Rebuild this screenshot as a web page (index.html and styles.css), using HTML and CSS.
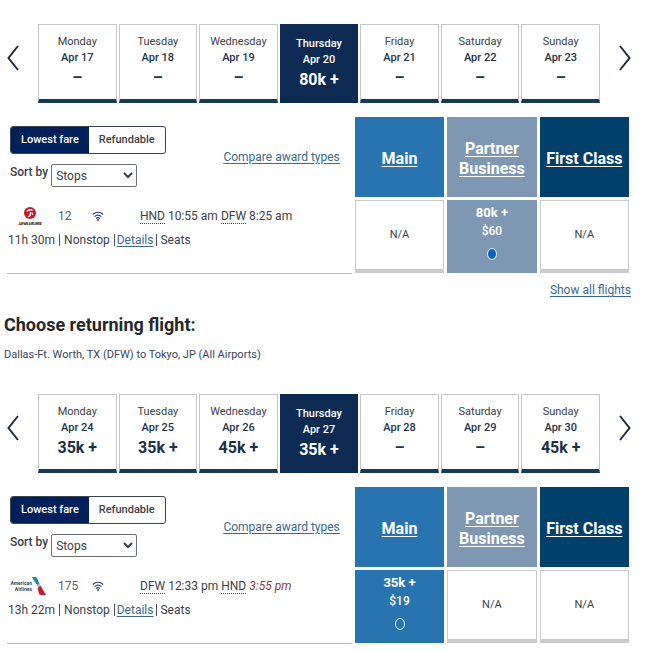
FILE: index.html
```
<!DOCTYPE html>
<html lang="en">
<head>
    <meta charset="UTF-8">
    <meta name="viewport" content="width=device-width, initial-scale=1.0">
    <title>Choose flights</title>
    <link rel="stylesheet" href="styles.css">
</head>
<body>
    <main>
        <!-- Departing flight -->
        <section class="trip">
            <div class="week">
                <button type="button" class="week-arrow" aria-label="Previous week">
                    <svg width="12" height="26" viewBox="0 0 12 26"><path d="M11 1 1.500 13 11 25"/></svg>
                </button>
                <div class="days">
                    <button type="button" class="day"><span>Monday</span><b>Apr 17</b><strong>–</strong></button>
                    <button type="button" class="day"><span>Tuesday</span><b>Apr 18</b><strong>–</strong></button>
                    <button type="button" class="day"><span>Wednesday</span><b>Apr 19</b><strong>–</strong></button>
                    <button type="button" class="day day--active"><span>Thursday</span><b>Apr 20</b><strong>80k +</strong></button>
                    <button type="button" class="day"><span>Friday</span><b>Apr 21</b><strong>–</strong></button>
                    <button type="button" class="day"><span>Saturday</span><b>Apr 22</b><strong>–</strong></button>
                    <button type="button" class="day"><span>Sunday</span><b>Apr 23</b><strong>–</strong></button>
                </div>
                <button type="button" class="week-arrow" aria-label="Next week">
                    <svg width="12" height="26" viewBox="0 0 12 26"><path d="M1 1l9.500 12L1 25"/></svg>
                </button>
            </div>

            <div class="results">
                <div class="info">
                    <div class="controls">
                        <div class="filters">
                            <div class="toggle">
                                <button type="button" class="toggle-btn toggle-btn--on">Lowest fare</button>
                                <button type="button" class="toggle-btn">Refundable</button>
                            </div>
                            <div class="sort">
                                <label for="sort-out">Sort by</label>
                                <select id="sort-out"><option>Stops</option></select>
                            </div>
                        </div>
                        <a href="#" class="compare">Compare award types</a>
                    </div>
                    <div class="flight">
                        <div class="flight-row">
                            <svg class="airline" width="38" height="20" viewBox="0 0 38 20" role="img" aria-label="Japan Airlines">
                                <circle cx="22" cy="7" r="6" fill="#cf1526"/>
                                <path d="M18.500 5Q21 1.500 25 4l-.8 1Q21.500 3.500 19.500 6ZM19.500 10.500q2.500-.5 2.200-4l1.300-.6q.8 4.600-2.600 5.400zM24 6l1.300 2.500-1 .8-1-2.500z" fill="#fff"/>
                                <text x="22" y="19" text-anchor="middle" class="jal-name">JAPAN AIRLINES</text>
                            </svg>
                            <span class="flight-no">12</span>
                            <svg class="wifi" width="12" height="10" viewBox="0 0 12 10"><path d="M.8 3.500q5.200-4.500 10.400 0M2.500 5.600q3.500-3 7 0M4 7.500q2-1.600 4 0"/><circle cx="6" cy="8.900" r="1"/></svg>
                            <span class="times"><abbr>HND</abbr> 10:55 am <abbr>DFW</abbr> 8:25 am</span>
                        </div>
                        <div class="flight-row">
                            <span>11h 30m</span><i class="bar"></i><span>Nonstop</span><i class="bar bar--close"></i><a href="#">Details</a><i class="bar bar--tight"></i><span>Seats</span>
                        </div>
                    </div>
                </div>
                <table class="fares">
                    <thead>
                        <tr>
                            <th class="main"><a href="#">Main</a></th>
                            <th class="partner"><a href="#">Partner Business</a></th>
                            <th class="first"><a href="#">First Class</a></th>
                        </tr>
                    </thead>
                    <tbody>
                        <tr>
                            <td>N/A</td>
                            <td class="fare partner">
                                <label><b>80k +</b><span>$60</span><input type="radio" name="fare-out" checked></label>
                            </td>
                            <td>N/A</td>
                        </tr>
                    </tbody>
                </table>
            </div>
            <div class="more"><a href="#">Show all flights</a></div>
        </section>

        <!-- Returning flight -->
        <section class="trip">
            <h2>Choose returning flight:</h2>
            <p class="route">Dallas-Ft. Worth, TX (DFW) to Tokyo, JP (All Airports)</p>
            <div class="week">
                <button type="button" class="week-arrow" aria-label="Previous week">
                    <svg width="12" height="26" viewBox="0 0 12 26"><path d="M11 1 1.500 13 11 25"/></svg>
                </button>
                <div class="days">
                    <button type="button" class="day"><span>Monday</span><b>Apr 24</b><strong>35k +</strong></button>
                    <button type="button" class="day"><span>Tuesday</span><b>Apr 25</b><strong>35k +</strong></button>
                    <button type="button" class="day"><span>Wednesday</span><b>Apr 26</b><strong>45k +</strong></button>
                    <button type="button" class="day day--active"><span>Thursday</span><b>Apr 27</b><strong>35k +</strong></button>
                    <button type="button" class="day"><span>Friday</span><b>Apr 28</b><strong>–</strong></button>
                    <button type="button" class="day"><span>Saturday</span><b>Apr 29</b><strong>–</strong></button>
                    <button type="button" class="day"><span>Sunday</span><b>Apr 30</b><strong>45k +</strong></button>
                </div>
                <button type="button" class="week-arrow" aria-label="Next week">
                    <svg width="12" height="26" viewBox="0 0 12 26"><path d="M1 1l9.500 12L1 25"/></svg>
                </button>
            </div>

            <div class="results">
                <div class="info">
                    <div class="controls">
                        <div class="filters">
                            <div class="toggle">
                                <button type="button" class="toggle-btn toggle-btn--on">Lowest fare</button>
                                <button type="button" class="toggle-btn">Refundable</button>
                            </div>
                            <div class="sort">
                                <label for="sort-back">Sort by</label>
                                <select id="sort-back"><option>Stops</option></select>
                            </div>
                        </div>
                        <a href="#" class="compare">Compare award types</a>
                    </div>
                    <div class="flight">
                        <div class="flight-row">
                            <svg class="airline" width="38" height="20" viewBox="0 0 38 20" role="img" aria-label="American Airlines">
                                <text x="24" y="9" text-anchor="end" class="aa-name">American</text>
                                <text x="24" y="15" text-anchor="end" class="aa-name">Airlines</text>
                                <path d="M24 1h3q1.500 0 2.200 1.500L31.500 8l-2.500 1z" fill="#1a86a8"/>
                                <path d="M29 8.500q2-1.500 3 .5l-2 2.500z" fill="#9aa6b0"/>
                                <path d="M29.500 12l3-2.500L38 19h-5q-1.500 0-2-1.500z" fill="#c4202f"/>
                            </svg>
                            <span class="flight-no">175</span>
                            <svg class="wifi" width="12" height="10" viewBox="0 0 12 10"><path d="M.8 3.500q5.200-4.500 10.400 0M2.500 5.600q3.500-3 7 0M4 7.500q2-1.600 4 0"/><circle cx="6" cy="8.900" r="1"/></svg>
                            <span class="times"><abbr>DFW</abbr> 12:33 pm <abbr>HND</abbr> <em>3:55 pm</em></span>
                        </div>
                        <div class="flight-row">
                            <span>13h 22m</span><i class="bar"></i><span>Nonstop</span><i class="bar bar--close"></i><a href="#">Details</a><i class="bar bar--tight"></i><span>Seats</span>
                        </div>
                    </div>
                </div>
                <table class="fares">
                    <thead>
                        <tr>
                            <th class="main"><a href="#">Main</a></th>
                            <th class="partner"><a href="#">Partner Business</a></th>
                            <th class="first"><a href="#">First Class</a></th>
                        </tr>
                    </thead>
                    <tbody>
                        <tr>
                            <td class="fare main">
                                <label><b>35k +</b><span>$19</span><input type="radio" name="fare-back"></label>
                            </td>
                            <td>N/A</td>
                            <td>N/A</td>
                        </tr>
                    </tbody>
                </table>
            </div>
        </section>
    </main>
</body>
</html>
```
FILE: styles.css
```
:root {
    --navy: #0d2a52;
    --edge: #173b50;
    --main: #2874b0;
    --partner: #7e98b4;
    --first: #00406a;
    --link: #396a8a;
    --text: #3c4146;
}

* {
    margin: 0;
    padding: 0;
    box-sizing: border-box;
}

body {
    font-family: Roboto, "Liberation Sans", sans-serif;
    font-size: 12px;
    line-height: 16px;
    color: var(--text);
    background-color: #fff;
}

button,
select {
    font: inherit;
    color: inherit;
    background: none;
    border: 0;
}

button {
    cursor: pointer;
}

a {
    color: var(--link);
    text-underline-offset: 2px;
}

main {
    padding-top: 24px;
}

/* Week strip */
.week {
    display: flex;
    align-items: center;
    gap: 19px;
    padding: 0 20px 0 7px;
}

.week-arrow {
    display: flex;
    padding-bottom: 12px;
}

.week-arrow svg {
    fill: none;
    stroke: #1d2b42;
    stroke-width: 2;
}

.days {
    flex: 1;
    display: grid;
    grid-template-columns: repeat(7, minmax(0, 1fr));
    gap: 2px;
}

.day {
    display: flex;
    flex-direction: column;
    align-items: center;
    height: 79px;
    padding-top: 9px;
    border: 1px solid #c4c6c8;
    border-bottom: 4px solid var(--edge);
    font-size: 11px;
    line-height: 16px;
}

.day b {
    font-weight: 500;
    color: #1d3346;
}

.day strong {
    font-size: 16px;
    font-weight: 700;
    line-height: 24px;
    color: #1b3148;
}

.day--active {
    padding-top: 11px;
    background-color: var(--navy);
    border-color: var(--navy);
    font-weight: 500;
}

.day--active,
.day--active b,
.day--active strong {
    color: #fff;
}

/* Search results */
.results {
    display: grid;
    grid-template-columns: minmax(0, 16fr) minmax(0, 13fr);
    margin-top: 11px;
    padding: 0 19px 0 7px;
}

.info {
    display: flex;
    flex-direction: column;
    justify-content: space-between;
    margin-bottom: 2px;
    border-bottom: 1px solid #b9bbbd;
}

.controls {
    display: flex;
    justify-content: space-between;
    align-items: center;
    padding: 12px 12px 0 3px;
}

.toggle {
    display: inline-flex;
    border: 1px solid #3a4350;
    border-radius: 3px;
    overflow: hidden;
}

.toggle-btn {
    padding: 0 10px;
    font-size: 11px;
    font-weight: 500;
    line-height: 26px;
}

.toggle-btn--on {
    background-color: #00205b;
    color: #fff;
}

.sort {
    display: flex;
    gap: 3px;
    margin-top: 10px;
}

.sort label {
    font-weight: 500;
}

.sort select {
    width: 86px;
    height: 23px;
    border: 1px solid #6c7074;
    border-radius: 2px;
}

.flight {
    padding-bottom: 21px;
}

.flight-row {
    display: flex;
    align-items: center;
    height: 24px;
    padding-left: 1px;
}

.flight-no {
    width: 34px;
    margin-left: 12px;
    color: #5b6166;
}

.wifi {
    fill: #2b3c7c;
}

.wifi path {
    fill: none;
    stroke: #2b3c7c;
    stroke-width: 1.2;
}

.times {
    margin-left: 36px;
}

.times abbr {
    border-bottom: 1px dotted #3c4146;
}

.times em {
    color: #8d3a3c;
}

.jal-name {
    font-size: 3px;
    font-weight: 900;
    fill: #111;
}

.aa-name {
    font-size: 5px;
    font-weight: 700;
    fill: #36495a;
}

.bar {
    width: 1px;
    height: 12px;
    margin: 0 4px;
    background-color: #4c5156;
}

.bar--close {
    margin-right: 2px;
}

.bar--tight {
    margin: 0 3px;
}

/* Fare columns */
.fares {
    width: 100%;
    table-layout: fixed;
    border-spacing: 3px;
    text-align: center;
}

.fares th {
    height: 80px;
    padding-top: 4px;
    font-size: 16px;
    font-weight: 700;
    line-height: 20px;
}

.fares th a {
    color: #fff;
}

.fares td {
    height: 73px;
    border: 1px solid #c9cbcd;
    border-bottom-width: 4px;
    font-size: 11px;
}

.fares .main {
    background-color: var(--main);
}

.fares .partner {
    background-color: var(--partner);
}

.fares .first {
    background-color: var(--first);
}

.fares .fare {
    border: 0;
    color: #fff;
    font-size: 12px;
    font-weight: 500;
    vertical-align: top;
}

.fare label {
    display: flex;
    flex-direction: column;
    align-items: center;
    padding-top: 3px;
    line-height: 19px;
}

.fare b {
    font-size: 13px;
    font-weight: 700;
}

.fare input {
    appearance: none;
    width: 10px;
    height: 12px;
    margin-top: 7px;
    border: 1px solid #d6f1ff;
    border-radius: 50%;
}

.fare input:checked {
    background-color: #0a64c8;
}

.more {
    padding: 6px 20px 0 0;
    text-align: right;
}

/* Returning flight heading */
h2 {
    margin-top: 15px;
    padding-left: 4px;
    font-size: 18px;
    font-weight: 700;
    line-height: 24px;
    color: #25282b;
}

.route {
    margin: 10px 0 31px;
    padding-left: 4px;
    font-size: 11px;
    color: #34485c;
}
```
